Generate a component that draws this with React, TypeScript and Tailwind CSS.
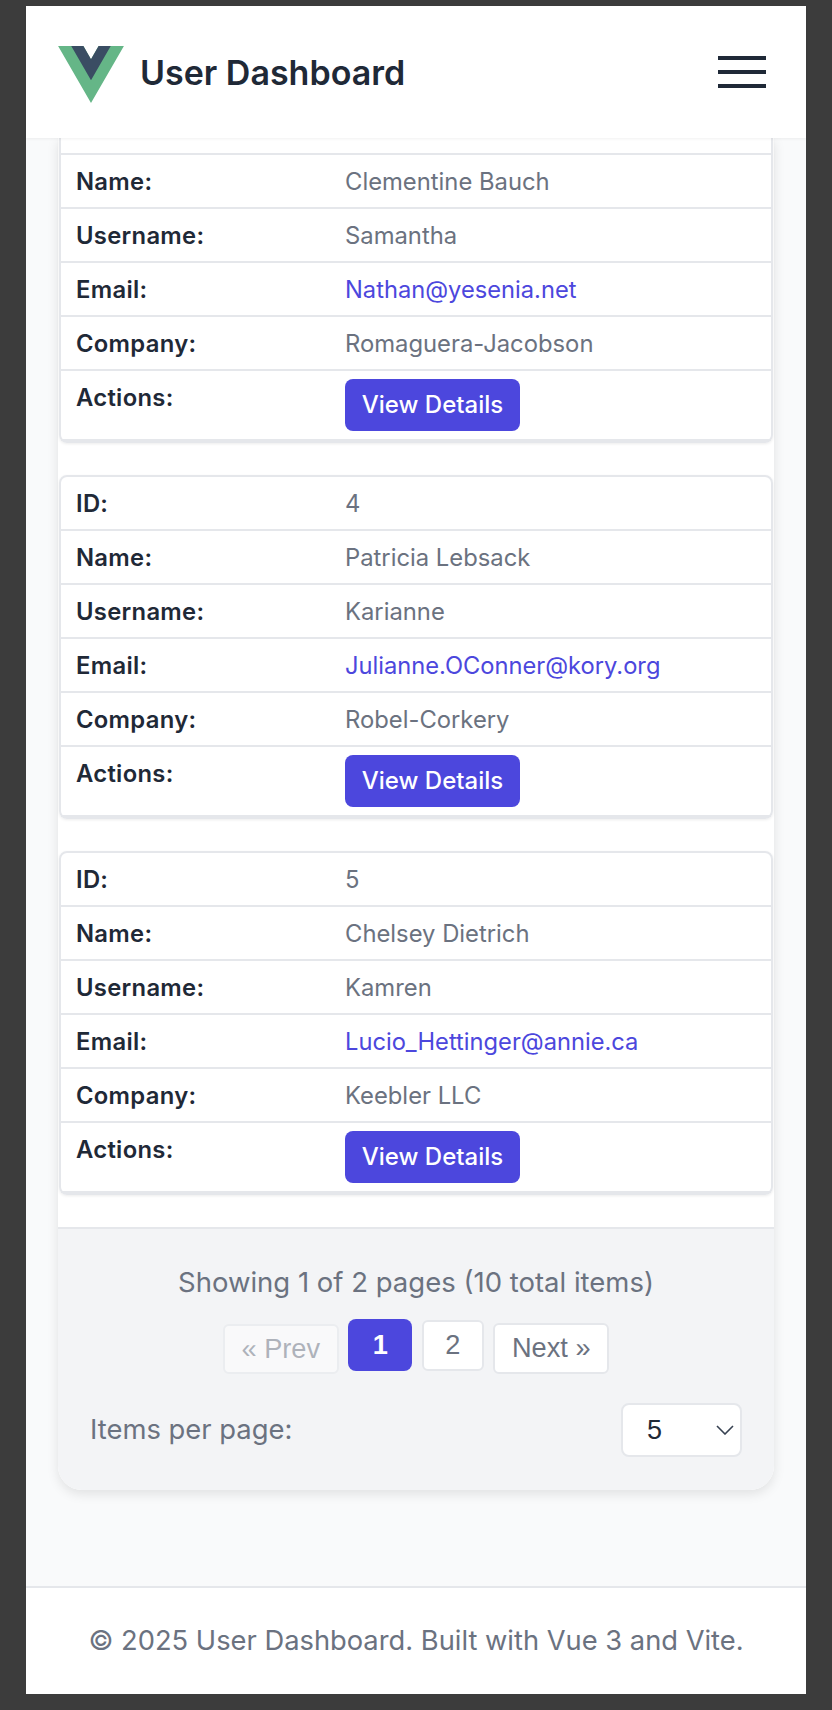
const users = [
  { id: 4, name: "Patricia Lebsack", username: "Karianne", email: "Julianne.OConner@kory.org", company: "Robel-Corkery" },
  { id: 5, name: "Chelsey Dietrich", username: "Kamren", email: "Lucio_Hettinger@annie.ca", company: "Keebler LLC" },
];

function VueLogo() {
  return (
    <svg viewBox="0 0 261.76 226.69" className="mt-[5px] h-[57px] w-[66px] shrink-0">
      <path d="M161.096.001l-30.225 52.351L100.647.001H-.005l130.877 226.688L261.749.001z" fill="#65b687" />
      <path d="M161.096.001l-30.225 52.351L100.647.001H52.346l78.526 136.01L209.398.001z" fill="#3a4d63" />
    </svg>
  );
}

function Row({ label, value, link }: { label: string; value: string; link?: boolean }) {
  return (
    <div className="flex h-[54px] items-center border-b-2 border-[#e5e7eb] pl-[15px] pr-[16px] pt-[1px]">
      <span className="w-[269px] text-[23.8px] font-[560] tracking-[0.3px] text-[#1f2937]">{label}</span>
      <span className={link ? "text-[23.7px] text-[#4c47dd]" : "text-[23.8px] text-[#6b7280]"}>{value}</span>
    </div>
  );
}

function ActionsRow() {
  return (
    <div className="flex h-[70px] items-start border-b-2 border-[#e5e7eb] pl-[15px] pr-[16px]">
      <span className="w-[269px] pt-[9px] text-[23.8px] font-[560] tracking-[0.3px] text-[#1f2937]">Actions:</span>
      <button className="mt-[8px] h-[52px] w-[175px] rounded-[8px] bg-[#4c47dd] text-[24px] font-medium text-white">
        View Details
      </button>
    </div>
  );
}

export default function App() {
  return (
    <div className="h-[1710px] bg-[#3c3c3c] px-[26px] pt-[6px] font-['Inter',sans-serif]">
      <div className="flex h-[1688px] flex-col bg-[#f9fafb]">
        <header className="relative z-10 flex h-[132px] items-center justify-between bg-white pl-[32px] pr-[40px] shadow-[0_1px_3px_rgba(0,0,0,0.06)]">
          <div className="flex items-center gap-[16px]">
            <VueLogo />
            <h1 className="text-[34px] font-semibold text-[#1f2937]">User Dashboard</h1>
          </div>
          <div className="flex w-[48px] flex-col gap-[10px]">
            <span className="h-[4px] bg-[#1f2937]" />
            <span className="h-[4px] bg-[#1f2937]" />
            <span className="h-[4px] bg-[#1f2937]" />
          </div>
        </header>

        <main className="flex-1 px-[32px]">
          <div className="rounded-b-[24px] bg-white shadow-[0_4px_12px_rgba(0,0,0,0.1)]">
            {/* first card is scrolled under the header */}
            <div className="mx-[1px] mb-[32px] rounded-b-[8px] border-x-2 border-b-2 border-[#e5e7eb] shadow-[0_1px_3px_rgba(0,0,0,0.08)]">
              <div className="h-[17px] border-b-2 border-[#e5e7eb]" />
              <Row label="Name:" value="Clementine Bauch" />
              <Row label="Username:" value="Samantha" />
              <Row label="Email:" value="Nathan@yesenia.net" link />
              <Row label="Company:" value="Romaguera-Jacobson" />
              <ActionsRow />
            </div>

            {users.map((u) => (
              <div key={u.id} className="mx-[1px] mb-[32px] rounded-[8px] border-2 border-[#e5e7eb] shadow-[0_1px_3px_rgba(0,0,0,0.08)]">
                <Row label="ID:" value={String(u.id)} />
                <Row label="Name:" value={u.name} />
                <Row label="Username:" value={u.username} />
                <Row label="Email:" value={u.email} link />
                <Row label="Company:" value={u.company} />
                <ActionsRow />
              </div>
            ))}

            <div className="rounded-b-[24px] border-t-2 border-[#e5e7eb] bg-[#f3f4f6] px-[32px] pt-[35px] pb-[33px]">
              <p className="text-center text-[27.5px] leading-[36px] text-[#6b7280]">Showing 1 of 2 pages (10 total items)</p>
              <div className="mt-[19px] flex items-start justify-center gap-[9.5px] font-['Liberation_Sans',sans-serif] text-[27.2px] text-[#6b7280]">
                <span className="mt-[5px] flex h-[50px] w-[116px] items-center justify-center rounded-[6px] border-2 border-[#e5e7eb] bg-white opacity-50">« Prev</span>
                <span className="flex h-[52px] w-[64px] items-center justify-center rounded-[8px] bg-[#4c47dd] font-bold text-white">1</span>
                <span className="mt-[1px] flex h-[51px] w-[62px] items-center justify-center rounded-[6px] border-2 border-[#e5e7eb] bg-white">2</span>
                <span className="mt-[4px] flex h-[51px] w-[116px] items-center justify-center rounded-[6px] border-2 border-[#e5e7eb] bg-white">Next »</span>
              </div>
              <div className="mt-[29px] flex items-center justify-between">
                <span className="text-[27.4px] text-[#6b7280]">Items per page:</span>
                <div className="relative h-[54px] w-[121px]">
                  <select className="h-full w-full appearance-none rounded-[8px] border-2 border-[#e5e7eb] bg-white pl-[24px] font-['Liberation_Sans',sans-serif] text-[27px] text-[#1f2937]">
                    <option>5</option>
                  </select>
                  <svg viewBox="0 0 18 10" className="absolute right-[8px] top-[22px] h-[10px] w-[18px]" fill="none" stroke="#374151" strokeWidth="1.6">
                    <path d="M1 1l8 8 8-8" />
                  </svg>
                </div>
              </div>
            </div>
          </div>
        </main>

        <footer className="flex h-[108px] items-center justify-center border-t-2 border-[#e5e7eb] bg-white">
          <p className="text-[27.3px] text-[#6b7280]">© 2025 User Dashboard. Built with Vue 3 and Vite.</p>
        </footer>
      </div>
    </div>
  );
}
